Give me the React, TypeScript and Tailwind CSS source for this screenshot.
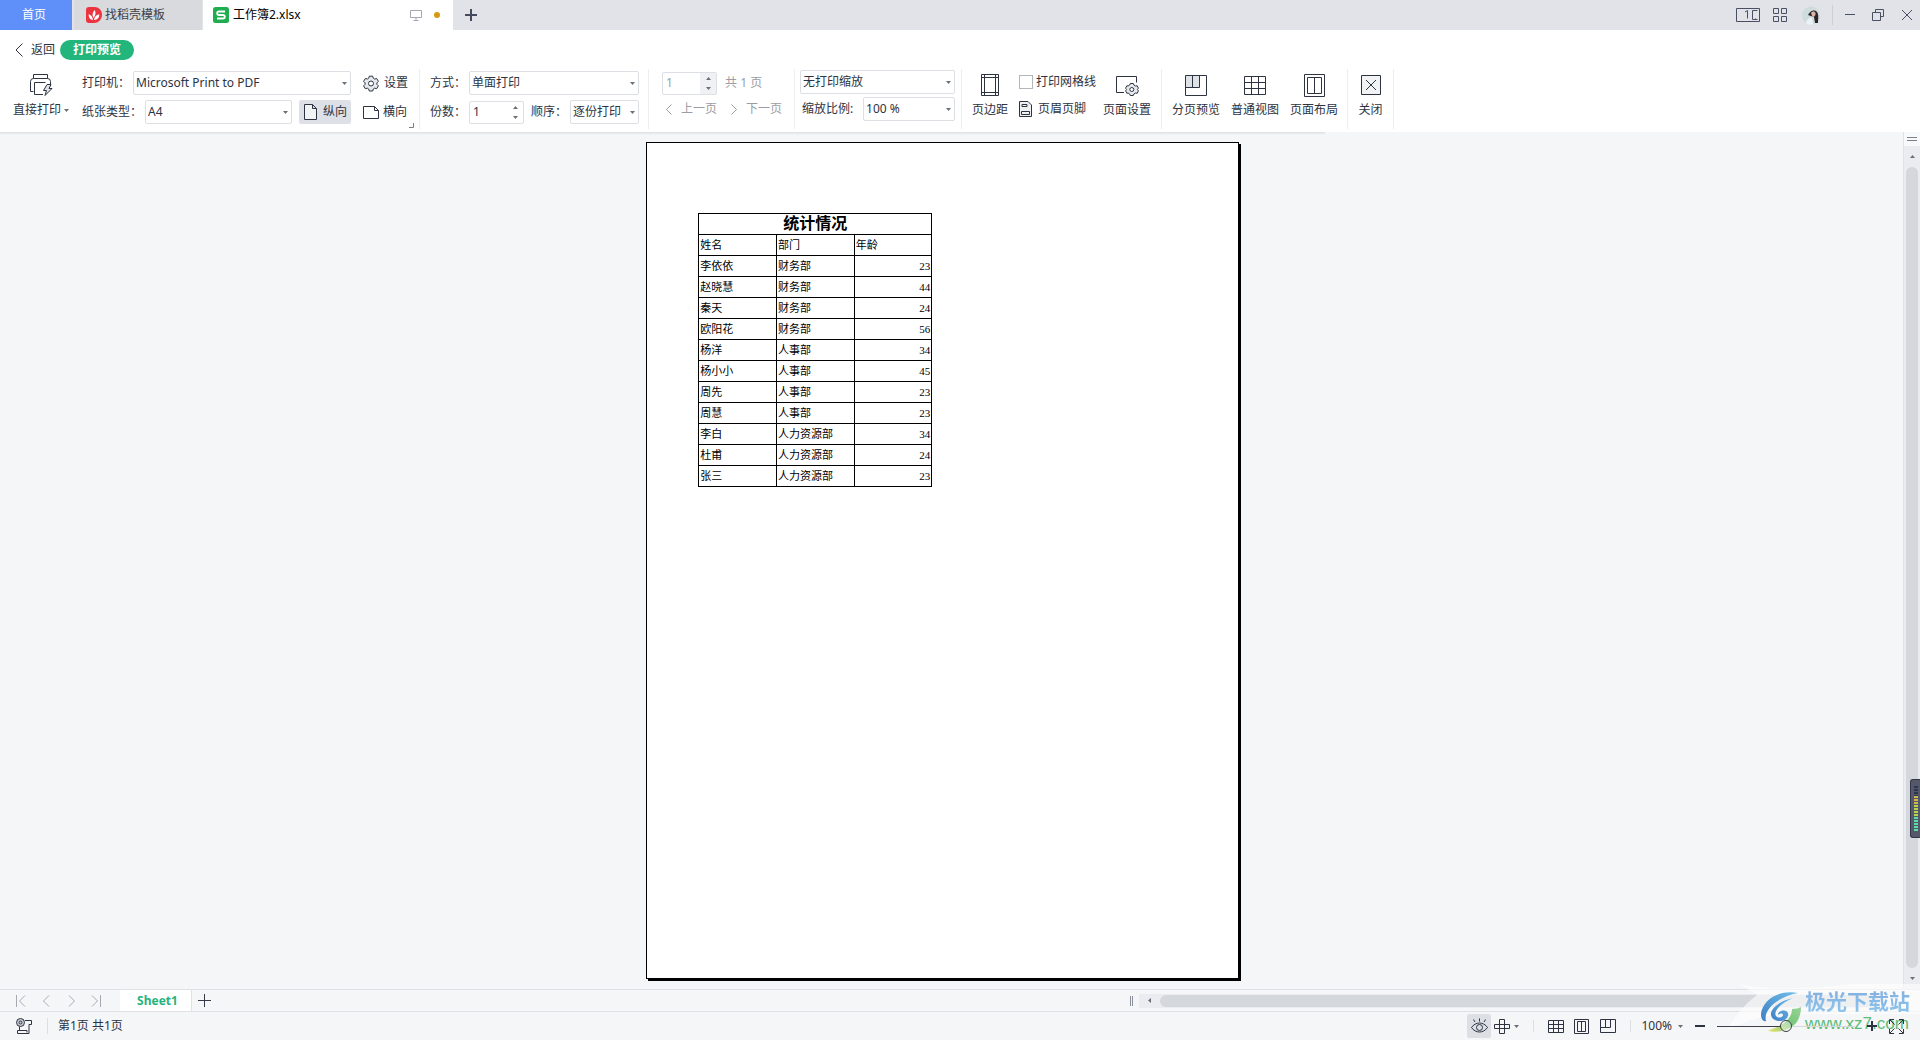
import type { ReactNode } from "react";

const rows = [
  ["李依依", "财务部", 23],
  ["赵晓慧", "财务部", 44],
  ["秦天", "财务部", 24],
  ["欧阳花", "财务部", 56],
  ["杨洋", "人事部", 34],
  ["杨小小", "人事部", 45],
  ["周先", "人事部", 23],
  ["周慧", "人事部", 23],
  ["李白", "人力资源部", 34],
  ["杜甫", "人力资源部", 24],
  ["张三", "人力资源部", 23],
];

function Icon({
  w,
  h,
  children,
  className = "",
}: {
  w: number;
  h: number;
  children: ReactNode;
  className?: string;
}) {
  return (
    <svg
      width={w}
      height={h}
      viewBox={`0 0 ${w} ${h}`}
      fill="none"
      stroke="currentColor"
      className={`shrink-0 ${className}`}
      aria-hidden="true"
    >
      {children}
    </svg>
  );
}

function Caret({ className = "" }: { className?: string }) {
  return (
    <Icon w={5} h={3} className={`text-[#6b7078] ${className}`}>
      <path d="M0 0h5L2.5 3z" fill="currentColor" stroke="none" />
    </Icon>
  );
}

function Select({ id, value, className }: { id: string; value: string; className: string }) {
  return (
    <div className={`relative shrink-0 ${className}`}>
      <select
        id={id}
        aria-label={value}
        className="block h-6 w-full appearance-none rounded-[2px] border border-[#dcdfe3] bg-white pl-[2px] pr-3 text-xs outline-none"
      >
        <option>{value}</option>
      </select>
      <Caret className="pointer-events-none absolute right-1 top-[11px]" />
    </div>
  );
}

function Spinner({ id, label, disabled }: { id: string; label: string; disabled?: boolean }) {
  return (
    <div
      className={`flex h-[23px] w-[55px] shrink-0 rounded-[2px] border border-[#dcdfe3] bg-white ${
        disabled ? "text-[#9a9da3]" : ""
      }`}
    >
      <input
        id={id}
        aria-label={label}
        defaultValue="1"
        disabled={disabled}
        className="min-w-0 flex-1 bg-transparent pl-[3px] text-xs outline-none"
      />
      <div className={`flex w-4 flex-col items-center justify-between py-1 ${disabled ? "bg-[#f0f1f5]" : ""}`}>
        <button aria-label="增加" className="h-[3px]">
          <Caret className="block rotate-180" />
        </button>
        <button aria-label="减少" className="h-[3px]">
          <Caret className="block" />
        </button>
      </div>
    </div>
  );
}

function Divider() {
  return <div className="mt-[3px] h-[60px] w-px shrink-0 bg-[#eceef1]" />;
}

function BigButton({ label, className, children }: { label: string; className: string; children: ReactNode }) {
  return (
    <button className={`flex shrink-0 flex-col items-center pt-[7px] ${className}`}>
      <span className="flex h-6 items-center justify-center">{children}</span>
      <span className="mt-[5px] whitespace-nowrap leading-4">{label}</span>
    </button>
  );
}

function GearIcon() {
  return (
    <Icon w={16} h={17}>
      <path
        d="M6.3 1.2h3.4l.6 2 1.3.8 2.1-.5 1.7 2.9-1.500 1.500v1.400l1.500 1.500-1.700 2.900-2.100-.5-1.300.8-.6 2H6.300l-.6-2-1.300-.8-2.100.5L.6 10.800l1.500-1.500V7.900L.6 6.400l1.700-2.900 2.100.5 1.300-.8z"
        fill="#e6e9ee"
      />
      <circle cx="8" cy="8.500" r="2.500" fill="#fff" />
    </Icon>
  );
}

function TitleBar() {
  return (
    <header className="flex h-[30px] shrink-0 bg-[#e1e3e8]">
      <button className="w-[72px] bg-[#5f90fa] pr-1 text-white">首页</button>
      <button className="ml-[2px] flex w-32 items-center gap-[3px] bg-[#d8dadd] pl-3 text-[#3c4048]">
        <Icon w={16} h={16}>
          <path d="M3 0h5.500A7.500 7.500 0 0 1 16 8a8 8 0 0 1-8 8H3a3 3 0 0 1-3-3V3a3 3 0 0 1 3-3z" fill="#ec3440" stroke="none" />
          <path
            d="M7 13C3.500 12.500 2.500 10 2.700 7.300 5 8 6.500 9.500 7 13zM7.500 11C5.800 8 6.500 5 8.800 3c1.300 2.800.9 5.500-1.300 8zM8 13c.3-3 2-5 5.300-5.700C13.500 10.500 11.500 12.800 8 13z"
            fill="#fff"
            stroke="none"
          />
        </Icon>
        找稻壳模板
      </button>
      <div className="ml-px flex w-[250px] items-center bg-white pl-[10px] pr-[13px] text-black">
        <Icon w={16} h={16}>
          <rect width="16" height="16" rx="2.500" fill="#1fae4f" stroke="none" />
          <path d="M12 4.500H6.200C3.500 4.500 3.500 8 6.200 8h3.600c2.700 0 2.700 3.500 0 3.500H4" stroke="#fff" strokeWidth="1.800" />
        </Icon>
        <span className="ml-1 flex-1">工作簿2.xlsx</span>
        <Icon w={12} h={11} className="text-[#a3a7af]">
          <path d="M.5.500h11v7H.5zM6 7.500v3M3.500 10.500h5" />
        </Icon>
        <span className="ml-3 h-[6px] w-[6px] rounded-full bg-[#d69a12]" />
      </div>
      <button aria-label="新建" className="ml-3 flex items-center text-[#454b5c]">
        <Icon w={12} h={12}>
          <path d="M6 0v12M0 6h12" strokeWidth="2" />
        </Icon>
      </button>
      <div className="ml-auto flex items-center pr-2 text-[#4a5064]">
        <button aria-label="窗口">
          <Icon w={24} h={14}>
            <path d="M.5.500h23v13H.5zM9 4l2.500-1.500v8M21.500 2.500h-5v9h5M19.500 10.500v1" />
          </Icon>
        </button>
        <button aria-label="应用" className="ml-[13px]">
          <Icon w={14} h={14}>
            <path d="M.5.500h5v5h-5zM8.500.500h5v5h-5zM.5 8.500h5v5h-5zM8.500 8.500h5v5h-5z" />
          </Icon>
        </button>
        <button aria-label="账户" className="ml-[15px]">
          <Icon w={18} h={19}>
            <circle cx="9" cy="9.500" r="9" fill="#cfdcdc" stroke="none" />
            <path d="M6 9c2-4 6-6 9-3 2 3 1 8 1 11h-3l-1-6z" fill="#2b2329" stroke="none" />
            <path d="M9 7c1-2 4-2 4.500 0s-1 4-3 4z" fill="#d9b3a4" stroke="none" />
            <path d="M4 17c1-4 4-6 6-5l1 6c-2 1-5 1-7-1z" fill="#e9f3f7" stroke="none" />
          </Icon>
        </button>
        <span className="ml-3 h-5 w-px bg-[#cbced4]" />
        <button aria-label="最小化" className="ml-3">
          <Icon w={10} h={12}>
            <path d="M0 5.500h10" />
          </Icon>
        </button>
        <button aria-label="还原" className="ml-[17px]">
          <Icon w={12} h={12}>
            <path d="M.5 3.500h8v8h-8zM3.500 3.500v-3h8v7h-3" />
          </Icon>
        </button>
        <button aria-label="关闭窗口" className="ml-[18px]">
          <Icon w={10} h={10}>
            <path d="M0 0l10 10M10 0L0 10" />
          </Icon>
        </button>
      </div>
    </header>
  );
}

function Ribbon() {
  return (
    <div className="flex h-[66px] bg-white">
      {/* Printer */}
      <button className="ml-[13px] flex w-[57px] shrink-0 flex-col pt-[7px]">
        <Icon w={24} h={24} className="ml-4">
          <path d="M4.500 5.500v-4h14v4M4.500 18.500h-3v-10a3 3 0 0 1 3-3h14a3 3 0 0 1 3 3v3M14 21.500H5.500v-12h11" />
          <path d="M18 11.500h4l-2 4h3l-7 7 1.500-5h-3z" fill="#dfe3e8" />
        </Icon>
        <span className="mt-[5px] flex items-center gap-[3px] whitespace-nowrap leading-4">
          直接打印
          <Caret />
        </span>
      </button>

      <div className="relative ml-3 flex w-[337px] shrink-0 flex-col gap-[5px] pt-[5px]">
        <div className="flex h-6 items-center">
          <label htmlFor="printer" className="mr-[3px]">打印机：</label>
          <Select id="printer" value="Microsoft Print to PDF" className="w-[218px]" />
          <button className="ml-3 flex items-center gap-[5px]">
            <GearIcon />
            设置
          </button>
        </div>
        <div className="flex h-6 items-center">
          <label htmlFor="paper" className="mr-[3px]">纸张类型：</label>
          <Select id="paper" value="A4" className="w-[147px]" />
          <button className="ml-[7px] flex h-6 w-[52px] items-center gap-[6px] rounded-[2px] bg-[#dde0e6] pl-[5px]">
            <Icon w={13} h={16}>
              <path d="M.5.500h8l4 4v11H.5zM8.500.500v4h4" fill="#f1f3f5" />
            </Icon>
            纵向
          </button>
          <button className="ml-3 flex items-center gap-1">
            <Icon w={16} h={13}>
              <path d="M.5.500h11l4 4v8H.5zM11.500.500v4h4" />
            </Icon>
            横向
          </button>
        </div>
        <Icon w={5} h={5} className="absolute bottom-1 right-[5px] text-[#7b8088]">
          <path d="M4.500 0v4.500H0" />
        </Icon>
      </div>
      <Divider />

      {/* Copies */}
      <div className="ml-[10px] mr-[9px] flex shrink-0 flex-col gap-[5px] pt-[5px]">
        <div className="flex h-6 items-center gap-[3px]">
          <label htmlFor="mode">方式：</label>
          <Select id="mode" value="单面打印" className="w-[170px]" />
        </div>
        <div className="flex h-6 items-center gap-[3px]">
          <label htmlFor="copies">份数：</label>
          <Spinner id="copies" label="份数" />
          <label htmlFor="order" className="ml-1">顺序：</label>
          <Select id="order" value="逐份打印" className="w-[69px]" />
        </div>
      </div>
      <Divider />

      {/* Page navigation */}
      <div className="ml-[13px] mr-[11px] flex w-[121px] shrink-0 flex-col gap-1 pt-[5px] text-[#9a9da3]">
        <div className="flex h-6 items-center gap-2">
          <Spinner id="page" label="页码" disabled />
          共 1 页
        </div>
        <div className="flex h-5 items-center whitespace-nowrap pl-1">
          <button className="flex items-center gap-[9px]" disabled>
            <Icon w={6} h={11}>
              <path d="M5.500.500l-5 5 5 5" />
            </Icon>
            上一页
          </button>
          <button className="ml-[14px] flex items-center gap-[9px]" disabled>
            <Icon w={6} h={11}>
              <path d="M.5.500l5 5-5 5" />
            </Icon>
            下一页
          </button>
        </div>
      </div>
      <Divider />

      {/* Scaling */}
      <div className="ml-[5px] mr-[6px] flex w-[155px] shrink-0 flex-col gap-[3px] pt-1">
        <Select id="scaling" value="无打印缩放" className="w-full" />
        <div className="flex items-center justify-between pl-[2px]">
          <label htmlFor="ratio">缩放比例:</label>
          <Select id="ratio" value="100 %" className="w-[92px]" />
        </div>
      </div>
      <Divider />

      <BigButton label="页边距" className="ml-[10px] w-9">
        <Icon w={20} h={22}>
          <path d="M1.500.500h17v21h-17zM4.500.500v21M15.500.500v21M1.500 3.500h17M1.500 18.500h17" />
        </Icon>
      </BigButton>
      <div className="ml-[11px] flex w-[78px] shrink-0 flex-col gap-[3px] whitespace-nowrap pt-1">
        <label className="flex h-6 items-center gap-[3px]">
          <input type="checkbox" className="h-[14px] w-[14px] appearance-none border border-[#b3b6bc] bg-white" />
          打印网格线
        </label>
        <button className="flex h-6 items-center gap-[6px]">
          <Icon w={13} h={16}>
            <path d="M.5.500h8.500l3.500 3.500v11.500H.5zM3 3.500h5v2H3zM2.500 10.500h8v3h-8z" fill="#eef0f3" />
          </Icon>
          页眉页脚
        </button>
      </div>
      <BigButton label="页面设置" className="ml-[3px] mr-[7px] w-[54px]">
        <Icon w={24} h={22}>
          <path d="M9 18.500H1.500v-16h20v6" />
          <path
            d="M15.300 9.500h3l.6 1.500 1.600 1 1.700-.3 1.200 2.500-1 1.300 1 1.300-1.200 2.500-1.700-.3-1.600 1-.6 1.500h-3l-.6-1.500-1.600-1-1.200.3-1.300-2.500 1-1.300-1-1.300 1.300-2.500 1.200.3 1.600-1z"
            fill="#e6e9ee"
          />
          <circle cx="16.800" cy="15.500" r="2" fill="#fff" />
        </Icon>
      </BigButton>
      <Divider />
      <BigButton label="分页预览" className="ml-[8px] w-[52px]">
        <Icon w={22} h={21}>
          <path d="M.5.500h14v12H.5z" fill="#dfe3e8" stroke="none" />
          <path d="M.5.500h21v20H.5zM.5 12.500h14v-12M7.500.500v12" />
        </Icon>
      </BigButton>
      <BigButton label="普通视图" className="ml-[7px] w-[52px]">
        <Icon w={22} h={19}>
          <path d="M.5.500h21v18H.5zM.5 6.500h21M.5 12.500h21M7.500.500v18M14.500.500v18" />
        </Icon>
      </BigButton>
      <BigButton label="页面布局" className="mx-[7px] w-[52px]">
        <Icon w={21} h={23}>
          <path d="M.5.500h20v22H.5z" />
          <path d="M3.500 3.500h14v16h-14zM10.500 3.500v16" />
        </Icon>
      </BigButton>
      <Divider />
      <BigButton label="关闭" className="mx-[9px] w-[27px]">
        <Icon w={20} h={20}>
          <path d="M.5.500h19v19H.5z" fill="#f1f3f5" />
          <path d="M5 5l10 10M15 5L5 15" />
        </Icon>
      </BigButton>
      <Divider />
    </div>
  );
}

function Preview() {
  return (
    <main className="relative flex min-h-0 flex-1 bg-[#f5f6f8]">
      <div className="absolute left-0 top-0 h-[3px] w-[69%] bg-linear-to-b from-[#dcdfe3] to-[#f5f6f8]" />
      <div className="flex min-w-0 flex-1 justify-center py-[10px] pr-[18px]">
        <div className="aspect-[593/838] h-full border border-black bg-white pl-[51px] pt-[70px] shadow-[2px_2px_0_#000]">
          <table className="w-[234px] table-fixed border-collapse font-['Liberation_Serif','Noto_Sans_CJK_SC',serif] text-[11px] leading-5 text-black">
            <thead>
              <tr>
                <th colSpan={3} className="h-[21px] border border-black p-0 text-base leading-5 font-bold">
                  统计情况
                </th>
              </tr>
            </thead>
            <tbody>
              <tr>
                {["姓名", "部门", "年龄"].map((name) => (
                  <td key={name} className="h-[21px] border border-black px-px py-0">
                    {name}
                  </td>
                ))}
              </tr>
              {rows.map(([name, dept, age]) => (
                <tr key={name}>
                  <td className="h-[21px] border border-black px-px py-0">{name}</td>
                  <td className="border border-black px-px py-0">{dept}</td>
                  <td className="border border-black px-px py-0 text-right">{age}</td>
                </tr>
              ))}
            </tbody>
          </table>
        </div>
      </div>

      {/* Vertical scroll bar */}
      <div className="flex w-[17px] shrink-0 flex-col items-center border-l border-[#dfe1e6] bg-[#ebecf1]">
        <div className="flex h-[14px] w-full items-center justify-center bg-[#f8f9fb]">
          <span className="h-1 w-[10px] border-y border-[#7c8088]" />
        </div>
        <button aria-label="向上滚动" className="flex h-[21px] items-center">
          <Caret className="rotate-180" />
        </button>
        <div className="w-3 flex-1 rounded-full bg-[#d4d7db]" />
        <button aria-label="向下滚动" className="flex h-[21px] items-center">
          <Caret />
        </button>
      </div>

      {/* Level meter docked on the window edge */}
      <div className="absolute bottom-[151px] right-0 flex h-[59px] w-[10px] items-center justify-center rounded-l-[3px] border border-r-0 border-[#34364a] bg-[#55576a]">
        <Icon w={4} h={46}>
          <path d="M2 0v10" stroke="#29384f" strokeWidth="4" strokeDasharray="2 1" />
          <path d="M2 10v9" stroke="#d2b84c" strokeWidth="4" strokeDasharray="2 1" />
          <path d="M2 19v12" stroke="#b9d444" strokeWidth="4" strokeDasharray="2 1" />
          <path d="M2 31v15" stroke="#57dfa8" strokeWidth="4" strokeDasharray="2 1" />
        </Icon>
      </div>
    </main>
  );
}

function SheetBar() {
  return (
    <div className="flex h-[23px] shrink-0 border-y border-[#dfe1e6] bg-[#f5f6f8]">
      <div className="flex w-[120px] items-center gap-[15px] pl-4 text-[#a5a9b0]">
        {[
          ["第一张", "M.5 0v12M9 .500l-5.500 5.500L9 11.500"],
          ["上一张", "M8 .500L2.500 6 8 11.500"],
          ["下一张", "M3 .500L8.500 6 3 11.500"],
          ["最后一张", "M9.500 0v12M1 .500L6.500 6 1 11.500"],
        ].map(([label, d]) => (
          <button key={label} aria-label={label}>
            <Icon w={10} h={12}>
              <path d={d} />
            </Icon>
          </button>
        ))}
      </div>
      <button className="w-[72px] border-r border-[#dfe1e6] bg-white pl-1 text-xs font-bold text-[#27b37d]">Sheet1</button>
      <button aria-label="新建工作表" className="ml-[6px] text-[#353a48]">
        <Icon w={13} h={13}>
          <path d="M6.500 0v13M0 6.500h13" />
        </Icon>
      </button>
      <div className="ml-auto flex w-[calc(41%+3px)] items-center">
        <span className="h-[10px] w-[3px] border-x border-[#8a8e98]" />
        <div className="ml-[6px] flex h-[14px] flex-1 items-center bg-[#ebecf1]">
          <button aria-label="向左滚动" className="flex w-[21px] justify-center">
            <Caret className="rotate-90" />
          </button>
          <div className="h-3 flex-1 rounded-full bg-[#d4d7db]" />
        </div>
        <span className="w-10" />
      </div>
    </div>
  );
}

function StatusBar() {
  return (
    <footer className="relative z-10 flex h-7 shrink-0 items-center">
      <button aria-label="宏" className="ml-4">
        <Icon w={16} h={17}>
          <circle cx="4.500" cy="4.500" r="4" fill="#c9cdd4" />
          <circle cx="4.500" cy="4.500" r="1.500" />
          <path d="M9 2.500h6.500v4H13v9H1.500v-3H11v2M3.500 8.500v4" />
        </Icon>
      </button>
      <span className="ml-[15px] h-4 w-px bg-[#dcdfe3]" />
      <span className="ml-[10px]">第1页 共1页</span>

      <div className="ml-auto flex items-center pr-4">
        <button aria-label="护眼模式" className="flex h-6 w-6 items-center justify-center rounded-[2px] bg-[#dcdfe4]">
          <Icon w={17} h={16}>
            <path d="M.5 9.500c4-6 12-6 16 0-4 6-12 6-16 0z" />
            <circle cx="8.500" cy="9.500" r="3" />
            <path d="M8.500.500v3M2.500 1.500l1.500 2.500M14.500 1.500L13 4" />
          </Icon>
        </button>
        <button aria-label="阅读模式" className="ml-[3px] flex items-center gap-1">
          <Icon w={16} h={15}>
            <path d="M5.500.500h5v14h-5zM.5 5.500h15v4H.5z" />
          </Icon>
          <Caret />
        </button>
        <span className="ml-[14px] h-3 w-px bg-[#dcdfe3]" />
        <button aria-label="普通视图" className="ml-[14px]">
          <Icon w={16} h={13}>
            <path d="M.5.500h15v12H.5zM.5 4.500h15M.5 8.500h15M5.500.500v12M10.500.500v12" />
          </Icon>
        </button>
        <button aria-label="页面布局" className="ml-[10px]">
          <Icon w={15} h={15}>
            <path d="M.5.500h14v14H.5zM3.500 2.500h8v10h-8zM7.500 2.500v10" />
          </Icon>
        </button>
        <button aria-label="分页预览" className="ml-[11px]">
          <Icon w={16} h={14}>
            <path d="M.5.500h15v13H.5zM.5 8.500h10v-8M5.500.500v8" />
          </Icon>
        </button>
        <span className="ml-[14px] h-3 w-px bg-[#dcdfe3]" />
        <button className="ml-[10px] flex items-center gap-[6px]">
          100%
          <Caret />
        </button>
        <button aria-label="缩小" className="ml-3">
          <Icon w={10} h={10}>
            <path d="M0 5h10" strokeWidth="2" />
          </Icon>
        </button>
        <input
          type="range"
          aria-label="缩放"
          defaultValue={50}
          className="ml-3 h-3 w-[138px] appearance-none bg-transparent bg-[linear-gradient(to_right,#3b404c_46%,transparent_46%,transparent_54%,#d4d7db_54%)] bg-[length:100%_1px] bg-center bg-no-repeat [&::-webkit-slider-thumb]:h-3 [&::-webkit-slider-thumb]:w-3 [&::-webkit-slider-thumb]:appearance-none [&::-webkit-slider-thumb]:rounded-full [&::-webkit-slider-thumb]:border [&::-webkit-slider-thumb]:border-[#3b404c] [&::-webkit-slider-thumb]:bg-white/40"
        />
        <button aria-label="放大" className="ml-3">
          <Icon w={10} h={10}>
            <path d="M0 5h10M5 0v10" strokeWidth="2" />
          </Icon>
        </button>
        <button aria-label="全屏" className="ml-3">
          <Icon w={15} h={15}>
            <path d="M.5 5V.500H5M10 .500h4.500V5M14.500 10v4.500H10M5 14.500H.5V10M1 1l4.500 4.500M14 1L9.500 5.500M14 14L9.500 9.500M1 14l4.500-4.500" />
          </Icon>
        </button>
      </div>
    </footer>
  );
}

function Watermark() {
  return (
    <div className="pointer-events-none absolute bottom-0 right-0 h-14 w-[192px]">
      <svg width="192" height="56" viewBox="0 0 192 56" className="absolute inset-0" aria-hidden="true">
        <defs>
          <linearGradient id="swirl" x1="0" y1="1" x2="1" y2="0">
            <stop offset="0" stopColor="#3f7fc6" />
            <stop offset="1" stopColor="#6fbfe8" />
          </linearGradient>
          <linearGradient id="leaf" x1="0" y1="1" x2="1" y2="0">
            <stop offset="0" stopColor="#ece65a" />
            <stop offset="0.500" stopColor="#6cc06c" />
            <stop offset="1" stopColor="#8ad08d" />
          </linearGradient>
        </defs>
        <path d="M12 0C40 7 90 4 126 0H192V30H60C36 30 18 38 0 45 8 29 18 20 30 10 24 8 18 4 12 0z" fill="#fff" opacity=".6" />
        <path d="M70 9C50 5 34 17 33 30c0 5 2 8 5 7C35 26 49 13 70 9z" fill="url(#swirl)" />
        <path
          d="M65 14C51 17 42 25 43 31c1 6 10 8 15 4 5-5 1-10-5-8-2 1-3 2-3 4 2-2 5-2 5 0s-4 4-7 1c-3-5 5-13 17-18z"
          fill="url(#swirl)"
        />
        <path d="M73 23c-2 1-5 2-9 2 0 8-6 14-15 18-5 2-8 4-10 3 9 5 27-1 31-10 2-4 3-8 3-13z" fill="url(#leaf)" opacity=".9" />
      </svg>
      <div className="absolute right-[10px] top-1 flex flex-col items-start whitespace-nowrap">
        <span className="bg-linear-to-b from-[#82aee0] to-[#8cc4ec] bg-clip-text font-['Noto_Sans_CJK_SC',sans-serif] text-[21px] leading-6 font-bold text-transparent">
          极光下载站
        </span>
        <span className="font-['Liberation_Sans',sans-serif] text-[17px] leading-6 text-[#5dbb77]">www.xz7.com</span>
      </div>
    </div>
  );
}

export default function App() {
  return (
    <div className="relative flex h-screen flex-col overflow-hidden bg-[#f5f6f8] font-['Noto_Sans','Noto_Sans_CJK_SC',sans-serif] text-xs text-[#2d3341]">
      <TitleBar />
      <nav className="flex h-9 shrink-0 items-center bg-white pl-[15px] pt-[3px]">
        <button className="flex items-center gap-2">
          <Icon w={8} h={14}>
            <path d="M7.500.500L1 7l6.500 6.500" />
          </Icon>
          返回
        </button>
        <button className="ml-[5px] h-5 w-[74px] rounded-full bg-[#22b67c] font-bold text-white">打印预览</button>
      </nav>
      <Ribbon />
      <Preview />
      <SheetBar />
      <StatusBar />
      <Watermark />
    </div>
  );
}
